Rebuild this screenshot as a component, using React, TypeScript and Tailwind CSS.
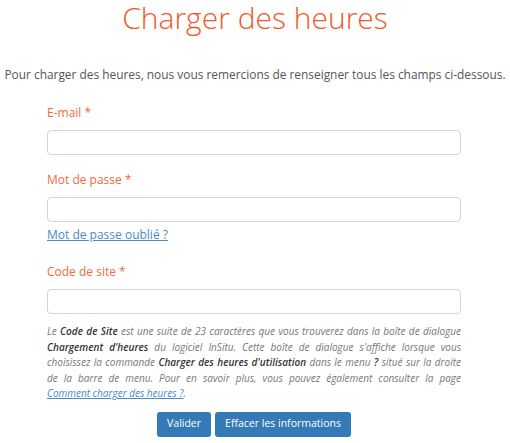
import React from 'react';

const Field: React.FC<{ label: string; type?: string }> = ({ label, type = 'text' }) => (
  <div className="flex flex-col">
    <label className="text-[12px] leading-[16px] text-[#f26a3d] mb-[9px]">{label}</label>
    <input
      type={type}
      className="h-[25px] w-full rounded-[4px] border border-[#d4d4d4] bg-white px-2 text-[12px] outline-none"
    />
  </div>
);

export default function App() {
  return (
    <div className="w-[510px] h-[443px] bg-white overflow-hidden font-['Open_Sans',sans-serif] text-[#555]">
      {/* Title */}
      <h1 className="text-center text-[30px] leading-[36px] font-light text-[#f2582a]">
        Charger des heures
      </h1>

      <p className="mt-[29px] text-center text-[11.9px] leading-[18px] text-[#555] whitespace-nowrap">
        Pour charger des heures, nous vous remercions de renseigner tous les champs ci-dessous.
      </p>

      <form className="mx-[47px] mt-[22px] w-[414px]" onSubmit={(e) => e.preventDefault()}>
        <Field label="E-mail *" type="email" />

        <div className="mt-[17px]">
          <Field label="Mot de passe *" type="password" />
        </div>
        <a href="#" className="mt-[5px] block text-[12px] leading-[16px] text-[#4a8ac6] underline">
          Mot de passe oublié ?
        </a>

        <div className="mt-[21px]">
          <Field label="Code de site *" />
        </div>

        {/* Help text */}
        <p className="mt-[10px] text-[10px] leading-[15.5px] italic text-[#777] text-justify">
          Le <b className="font-semibold text-[#333]">Code de Site</b> est une suite de 23 caractères que vous trouverez dans la boîte de dialogue{' '}
          <b className="font-semibold text-[#333]">Chargement d'heures</b> du logiciel InSitu. Cette boîte de dialogue s'affiche lorsque vous
          choisissez la commande <b className="font-semibold text-[#333]">Charger des heures d'utilisation</b> dans le menu{' '}
          <b className="font-semibold text-[#333]">?</b> situé sur la droite de la barre de menu. Pour en savoir plus, vous pouvez également consulter la page{' '}
          <a href="#" className="whitespace-nowrap text-[#4a8ac6] underline">Comment charger des heures ?</a>.
        </p>

        <div className="mt-[10px] flex justify-center gap-[4px]">
          <button className="h-[25px] rounded-[3px] bg-[#337ab7] px-[10px] text-[10.5px] text-white">
            Valider
          </button>
          <button className="h-[25px] rounded-[3px] bg-[#337ab7] px-[10px] text-[10.5px] text-white">
            Effacer les informations
          </button>
        </div>
      </form>
    </div>
  );
}
